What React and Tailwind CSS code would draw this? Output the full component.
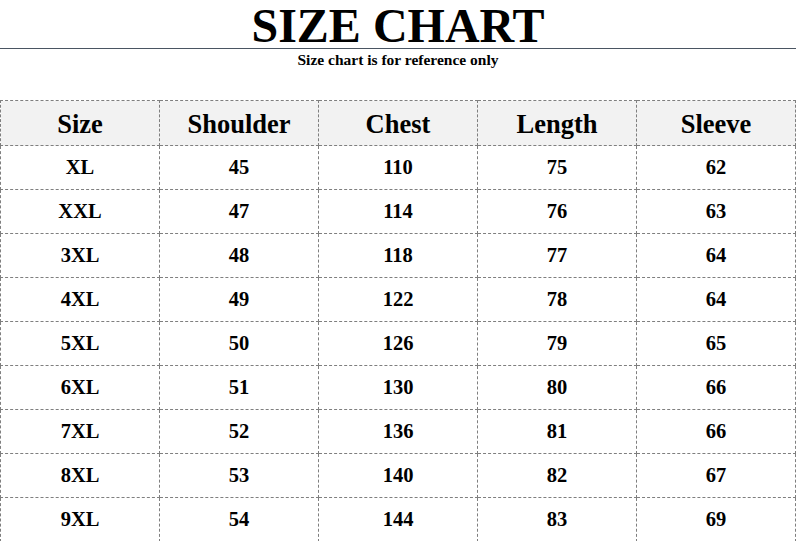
import React from "react";

const rows = [
  ["XL", "45", "110", "75", "62"],
  ["XXL", "47", "114", "76", "63"],
  ["3XL", "48", "118", "77", "64"],
  ["4XL", "49", "122", "78", "64"],
  ["5XL", "50", "126", "79", "65"],
  ["6XL", "51", "130", "80", "66"],
  ["7XL", "52", "136", "81", "66"],
  ["8XL", "53", "140", "82", "67"],
  ["9XL", "54", "144", "83", "69"],
];

const headers = ["Size", "Shoulder", "Chest", "Length", "Sleeve"];

export default function App() {
  return (
    <div
      className="w-[796px] h-[541px] bg-white text-black overflow-hidden"
      style={{ fontFamily: '"Liberation Serif", "Times New Roman", serif' }}
    >
      <div className="h-[49px] border-b border-[#4a5562] box-border text-center">
        <div className="text-[48px] font-bold leading-[52px]">SIZE CHART</div>
      </div>
      <div className="text-center text-[15.5px] font-bold leading-[22px]">
        Size chart is for reference only
      </div>
      <div className="h-[29px]" />
      <table className="w-full table-fixed border-collapse">
        <thead>
          <tr className="h-[45px] bg-[#f2f2f2]">
            {headers.map((h) => (
              <th
                key={h}
                className="border border-dashed border-[#7f7f7f] text-[26.5px] font-bold text-center align-middle p-0 pt-[3px]"
              >
                {h}
              </th>
            ))}
          </tr>
        </thead>
        <tbody>
          {rows.map((r) => (
            <tr key={r[0]} className="h-[44px] bg-white">
              {r.map((c, i) => (
                <td
                  key={i}
                  className="border border-dashed border-[#7f7f7f] text-[20.5px] font-bold text-center align-middle p-0"
                >
                  {c}
                </td>
              ))}
            </tr>
          ))}
        </tbody>
      </table>
    </div>
  );
}
